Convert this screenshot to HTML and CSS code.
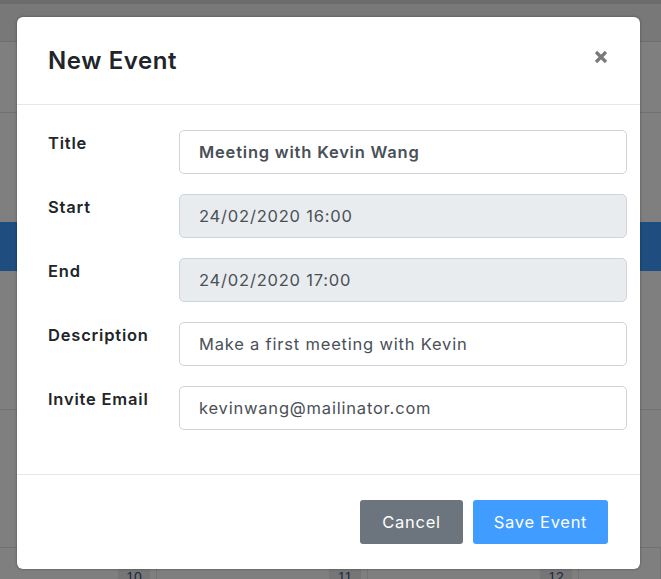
FILE: index.html
```html
<!DOCTYPE html>
<html lang="en">
<head>
<meta charset="utf-8">
<title>New Event</title>
<link rel="stylesheet" href="styles.css">
</head>
<body>
<div class="calendar">
  <div class="cal-top"></div>
  <div class="cal-toolbar"></div>
  <div class="cal-row r1"></div>
  <div class="cal-row r2"><div class="cal-event"></div></div>
  <div class="cal-row r3"></div>
  <div class="cal-row r4">
    <div class="cal-cell"><span class="day">10</span></div>
    <div class="cal-cell"><span class="day">11</span></div>
    <div class="cal-cell"><span class="day">12</span></div>
    <div class="cal-cell"></div>
  </div>
</div>

<div class="modal" role="dialog" aria-labelledby="modal-title">
  <div class="modal-header">
    <h2 id="modal-title" class="modal-title">New Event</h2>
    <button class="close" aria-label="Close">
      <svg width="14" height="14" viewBox="0 0 14 14"><path d="M2 2 L12 12 M12 2 L2 12" stroke="#7a7a7a" stroke-width="3.2" stroke-linecap="butt"/></svg>
    </button>
  </div>
  <div class="modal-body">
    <div class="form-row">
      <label class="form-label">Title</label>
      <input class="form-control strong" type="text" value="Meeting with Kevin Wang">
    </div>
    <div class="form-row">
      <label class="form-label">Start</label>
      <input class="form-control" type="text" value="24/02/2020 16:00" disabled>
    </div>
    <div class="form-row">
      <label class="form-label">End</label>
      <input class="form-control" type="text" value="24/02/2020 17:00" disabled>
    </div>
    <div class="form-row">
      <label class="form-label">Description</label>
      <input class="form-control" type="text" value="Make a first meeting with Kevin">
    </div>
    <div class="form-row">
      <label class="form-label">Invite Email</label>
      <input class="form-control" type="text" value="kevinwang@mailinator.com">
    </div>
  </div>
  <div class="modal-footer">
    <button class="btn btn-secondary">Cancel</button>
    <button class="btn btn-primary">Save Event</button>
  </div>
</div>
</body>
</html>
```
FILE: styles.css
```css
* { box-sizing: border-box; }
html, body { margin: 0; padding: 0; }
body {
  width: 661px;
  height: 579px;
  overflow: hidden;
  position: relative;
  background: #7f7f7f;
  font-family: "Inter", "Open Sans", sans-serif;
}

/* dimmed calendar behind the dialog */
.calendar { display: flex; flex-direction: column; }
.cal-top { height: 4px; background: #6c6c6c; }
.cal-toolbar { height: 38px; background: #787878; border-bottom: 1px solid #6f6f6f; }
.cal-row { border-bottom: 1px solid #727272; background: #7f7f7f; }
.r1 { height: 71px; }
.r2 { height: 297px; padding-top: 109px; }
.cal-event { height: 49px; background: #1f4d80; }
.r3 { height: 138px; }
.r4 { height: 40px; display: grid; grid-template-columns: 157px 211px 211px 1fr; }
.cal-cell { border-right: 1px solid #747474; display: flex; justify-content: flex-end; align-items: flex-start; padding-right: 6px; padding-top: 17px; }
.day { display: block; width: 32px; height: 24px; background: #767676; color: #1a2a40; font-size: 14px; line-height: 24px; text-align: center; font-family: "Liberation Sans", sans-serif; }

/* dialog */
.modal {
  position: absolute;
  left: 17px;
  top: 17px;
  width: 623px;
  background: #fff;
  border-radius: 6px;
  box-shadow: 0 0 3px rgba(0,0,0,0.35);
  overflow: hidden;
}
.modal-header {
  display: flex;
  align-items: center;
  justify-content: space-between;
  padding: 26px 32px 25px 31px;
  border-bottom: 1px solid #e3e8ee;
}
.modal-title {
  margin: 0;
  font-size: 24px;
  line-height: 36px;
  font-weight: 600;
  color: #212529;
  letter-spacing: 0.6px;
}
.close {
  border: 0;
  background: none;
  padding: 0;
  margin-top: -8px;
  width: 14px;
  height: 14px;
  cursor: pointer;
}
.close svg { display: block; }

.modal-body {
  padding: 25px 13px 24px 31px;
}
.form-row {
  display: grid;
  grid-template-columns: 131px 1fr;
  align-items: start;
  margin-bottom: 20px;
}
.form-label {
  font-size: 16.5px;
  line-height: 24px;
  font-weight: 600;
  color: #212529;
  letter-spacing: 0.8px;
  padding-top: 1px;
}
.form-control {
  display: block;
  width: 100%;
  height: 44px;
  padding: 0 19px;
  border: 1px solid #ced4da;
  border-radius: 5px;
  background: #fff;
  font-family: inherit;
  font-size: 16.5px;
  color: #495057;
  letter-spacing: 0.8px;
}
.form-control:disabled { background: #e9ecef; color: #495057; opacity: 1; }
.form-control.strong { font-weight: 600; letter-spacing: 0.8px; }

.modal-footer {
  display: flex;
  justify-content: flex-end;
  gap: 10px;
  padding: 25px 32px 25px;
  border-top: 1px solid #e3e8ee;
}
.btn {
  height: 44px;
  border: 0;
  border-radius: 3px;
  padding: 0 8px;
  font-family: inherit;
  font-size: 16.5px;
  letter-spacing: 0.7px;
  color: #fff;
  cursor: pointer;
}
.btn-secondary { background: #6c757d; width: 103px; }
.btn-primary { background: #409cff; width: 135px; }
```
